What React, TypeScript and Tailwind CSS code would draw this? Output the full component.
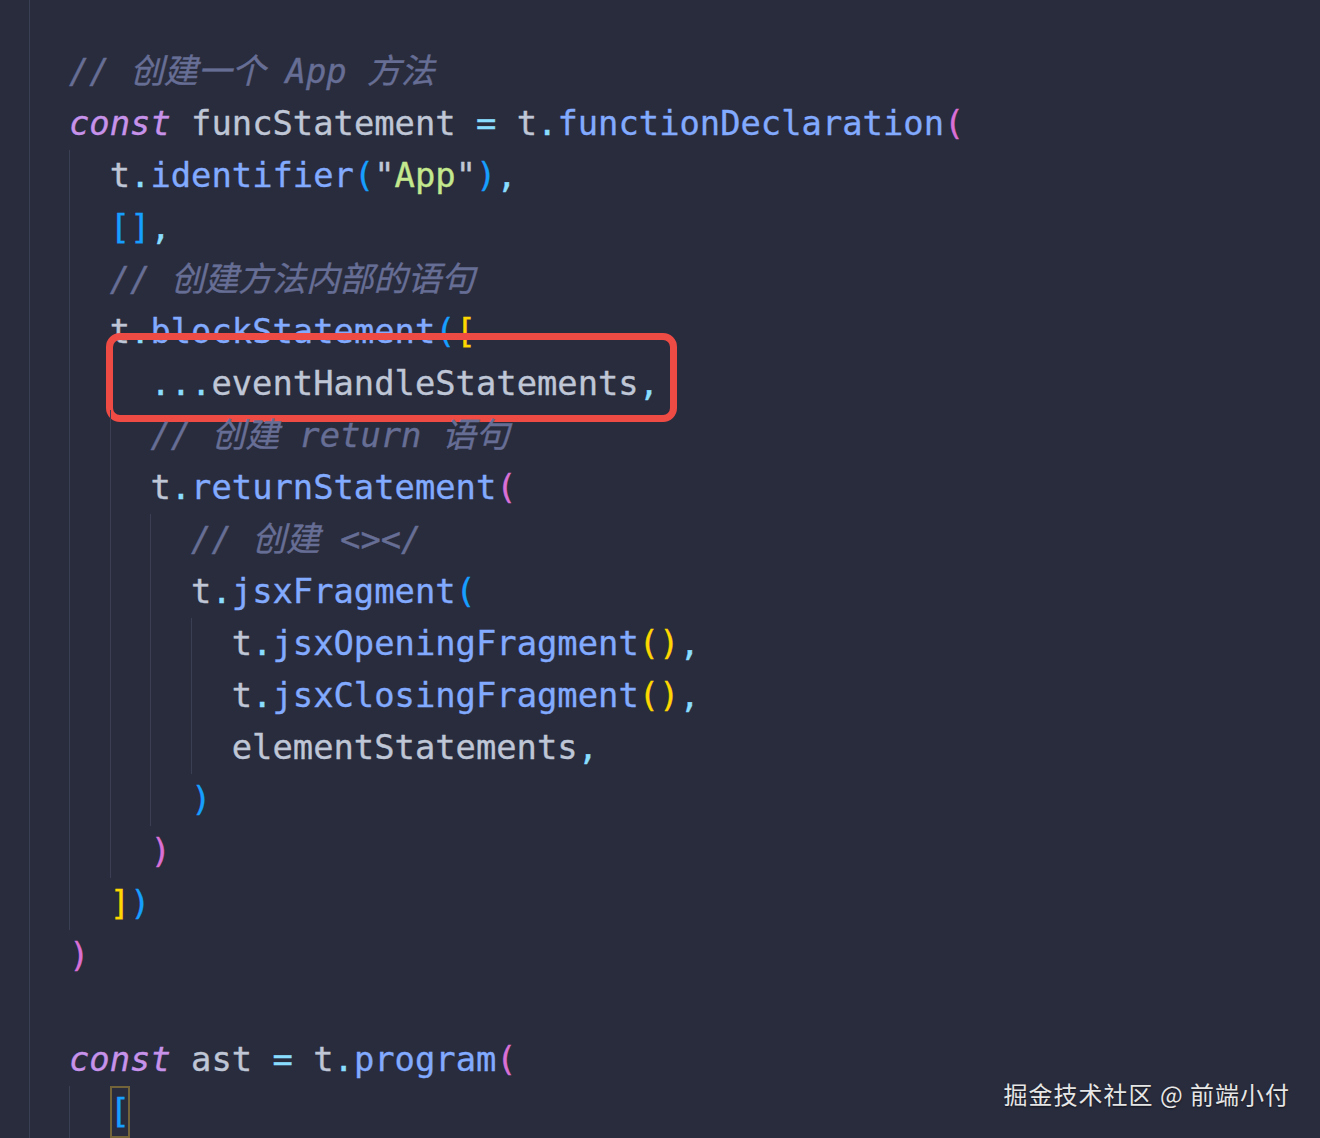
import React from "react";

type Tok = [string, string];

const C: Record<string, string> = {
  c: "text-[#676e95] italic",
  k: "text-[#c792ea] italic",
  d: "text-[#bfc6d6]",
  f: "text-[#82aaff]",
  p: "text-[#89ddff]",
  s: "text-[#c3e88d]",
  b1: "text-[#da70d6]",
  b2: "text-[#179fff]",
  b3: "text-[#ffd700]",
  bm: "text-[#179fff] shadow-[inset_0_0_0_2px_#74643a]",
};

type Line = { indent: number; guides: number; toks: Tok[]; box?: boolean };

const lines: Line[] = [
  { indent: 0, guides: 0, toks: [["c", "// 创建一个 App 方法"]] },
  {
    indent: 0,
    guides: 0,
    toks: [
      ["k", "const"],
      ["d", " funcStatement "],
      ["p", "="],
      ["d", " t"],
      ["p", "."],
      ["f", "functionDeclaration"],
      ["b1", "("],
    ],
  },
  {
    indent: 1,
    guides: 1,
    toks: [
      ["d", "t"],
      ["p", "."],
      ["f", "identifier"],
      ["b2", "("],
      ["d", '"'],
      ["s", "App"],
      ["d", '"'],
      ["b2", ")"],
      ["p", ","],
    ],
  },
  { indent: 1, guides: 1, toks: [["b2", "[]"], ["p", ","]] },
  { indent: 1, guides: 1, toks: [["c", "// 创建方法内部的语句"]] },
  {
    indent: 1,
    guides: 1,
    toks: [
      ["d", "t"],
      ["p", "."],
      ["f", "blockStatement"],
      ["b2", "("],
      ["b3", "["],
    ],
  },
  {
    indent: 2,
    guides: 2,
    box: true,
    toks: [
      ["p", "..."],
      ["d", "eventHandleStatements"],
      ["p", ","],
    ],
  },
  { indent: 2, guides: 2, toks: [["c", "// 创建 return 语句"]] },
  {
    indent: 2,
    guides: 2,
    toks: [
      ["d", "t"],
      ["p", "."],
      ["f", "returnStatement"],
      ["b1", "("],
    ],
  },
  { indent: 3, guides: 3, toks: [["c", "// 创建 <></"]] },
  {
    indent: 3,
    guides: 3,
    toks: [
      ["d", "t"],
      ["p", "."],
      ["f", "jsxFragment"],
      ["b2", "("],
    ],
  },
  {
    indent: 4,
    guides: 4,
    toks: [
      ["d", "t"],
      ["p", "."],
      ["f", "jsxOpeningFragment"],
      ["b3", "()"],
      ["p", ","],
    ],
  },
  {
    indent: 4,
    guides: 4,
    toks: [
      ["d", "t"],
      ["p", "."],
      ["f", "jsxClosingFragment"],
      ["b3", "()"],
      ["p", ","],
    ],
  },
  {
    indent: 4,
    guides: 4,
    toks: [
      ["d", "elementStatements"],
      ["p", ","],
    ],
  },
  { indent: 3, guides: 3, toks: [["b2", ")"]] },
  { indent: 2, guides: 2, toks: [["b1", ")"]] },
  { indent: 1, guides: 1, toks: [["b3", "]"], ["b2", ")"]] },
  { indent: 0, guides: 0, toks: [["b1", ")"]] },
  { indent: 0, guides: 0, toks: [] },
  {
    indent: 0,
    guides: 0,
    toks: [
      ["k", "const"],
      ["d", " ast "],
      ["p", "="],
      ["d", " t"],
      ["p", "."],
      ["f", "program"],
      ["b1", "("],
    ],
  },
  { indent: 1, guides: 1, toks: [["bm", "["]] },
];

function CodeLine({ line }: { line: Line }) {
  const units = Array.from({ length: line.indent });
  return (
    <div className="relative flex h-[52px] items-stretch">
      {units.map((_, i) => (
        <span
          key={i}
          className={
            i < line.guides
              ? "w-[2ch] shrink-0 border-l border-[#3b3f53]"
              : "w-[2ch] shrink-0"
          }
        />
      ))}
      <span className="flex items-center whitespace-pre">
        {line.toks.map(([t, s], i) => (
          <span key={i} className={C[t] + " inline-block leading-[52px]"}>
            {s}
          </span>
        ))}
      </span>
      {line.box && (
        <div className="pointer-events-none absolute left-[37px] top-[-25px] h-[89px] w-[571px] rounded-[14px] border-[7px] border-[#ee4b45]" />
      )}
    </div>
  );
}

export default function App() {
  return (
    <div className="relative flex h-[1138px] w-full overflow-hidden bg-[#292c3d]">
      <div className="w-[30px] shrink-0 border-r border-[#3b3f53]" />
      <div className="flex-1 pl-[39px] pt-[46px] font-['DejaVu_Sans_Mono','Noto_Sans_CJK_SC',monospace] text-[33.8px] leading-[52px] [-webkit-text-stroke:0.35px_currentColor]">
        {lines.map((l, i) => (
          <CodeLine key={i} line={l} />
        ))}
      </div>
      <div className="absolute bottom-[30px] right-[30px] font-['Noto_Sans_CJK_SC',sans-serif] text-[24px] leading-[28px] tracking-[1px] text-[#e6e6e6] [text-shadow:0_1px_2px_rgba(0,0,0,0.6)]">
        掘金技术社区 @ 前端小付
      </div>
    </div>
  );
}
